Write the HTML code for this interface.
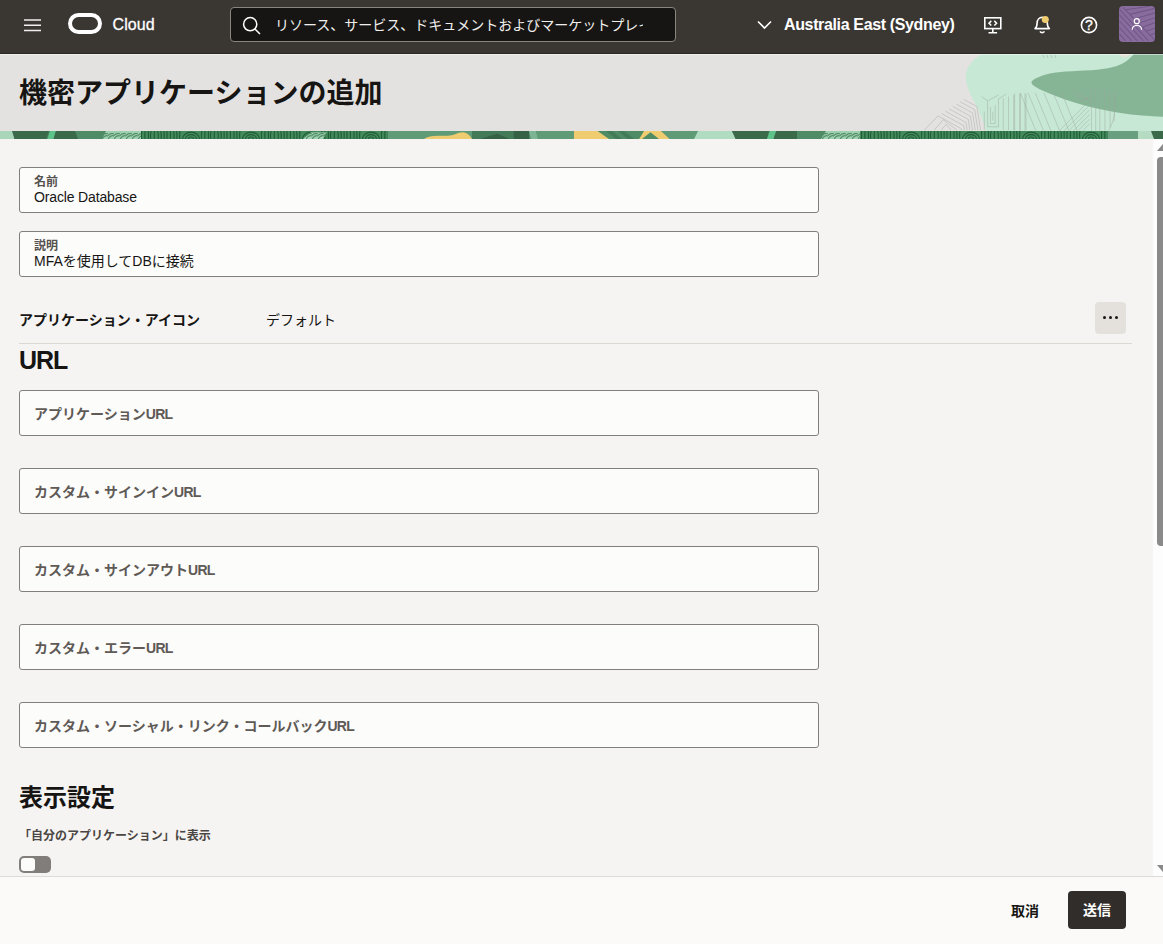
<!DOCTYPE html>
<html lang="ja">
<head>
<meta charset="utf-8">
<title>機密アプリケーションの追加</title>
<style>
*{box-sizing:border-box;margin:0;padding:0}
html,body{width:1163px;height:944px;overflow:hidden;background:#f5f4f2}
body{position:relative;font-family:"Liberation Sans","Noto Sans CJK JP",sans-serif;color:#161513;font-size:14px}
.abs{position:absolute}
/* header */
#hdr{position:absolute;left:0;top:0;width:1163px;height:54px;background:#3a3632;color:#fff;border-bottom:1px solid #2b2724;z-index:3}
#hdr svg{position:absolute;overflow:visible}
#cloud{position:absolute;left:112.6px;top:15px;font-size:16px;line-height:20px;color:#fff;letter-spacing:0.05px;-webkit-text-stroke:.3px #fff}
#search{position:absolute;left:230px;top:7px;width:446px;height:35px;border:1px solid #8b8580;border-radius:4px;background:#161513}
#search span{position:absolute;left:44px;top:6px;width:368px;height:22px;line-height:22px;font-size:14px;color:#f1efed;white-space:nowrap;overflow:hidden}
#region{position:absolute;left:784px;top:15px;font-size:16px;line-height:20px;font-weight:bold;color:#fff;letter-spacing:-0.36px;white-space:nowrap}
#avatar{position:absolute;left:1119px;top:6px;width:36px;height:36px;border-radius:4px;background:#886c9d;overflow:hidden}
/* banner */
#banner{position:absolute;left:0;top:53px;width:1163px;height:86px;background:#e4e2e0;overflow:hidden}
#banner svg{position:absolute;left:0;top:0}
#title{position:absolute;left:19px;top:21px;font-size:28px;line-height:40px;font-weight:bold;color:#161513;white-space:nowrap}
/* content */
.field{position:absolute;left:19px;width:800px;height:46px;border:1px solid #817e7b;border-radius:3px;background:#fcfcfb}
.field .lbl{position:absolute;left:14px;top:7px;font-size:12px;line-height:14px;color:#55514e;font-weight:bold}
.field .val{position:absolute;left:14px;top:20px;font-size:14px;line-height:18px;color:#161513;white-space:nowrap}
.field .ph span{letter-spacing:-0.7px}
.field .ph{position:absolute;left:14px;top:12.7px;font-size:14px;line-height:20px;color:#5f5a56;font-weight:bold;white-space:nowrap}
h2{position:absolute;left:19px;font-size:24px;line-height:30px;font-weight:bold;color:#161513;white-space:nowrap}
#iconlbl{position:absolute;left:19px;top:310px;font-size:14px;line-height:20px;font-weight:bold;color:#161513;white-space:nowrap}
#iconval{position:absolute;left:266px;top:310px;font-size:14px;line-height:20px;color:#161513;white-space:nowrap}
#more{position:absolute;left:1095px;top:302px;width:31px;height:32px;border-radius:4px;background:#e4e1dd}
#more i{position:absolute;top:14px;width:3px;height:3px;border-radius:50%;background:#161513}
#hr1{position:absolute;left:19px;top:343px;width:1113px;height:1px;background:#dcd9d5}
#showlbl{position:absolute;left:19px;top:827.5px;font-size:12px;line-height:16px;font-weight:bold;color:#4a4643;white-space:nowrap}
#toggle{position:absolute;left:19px;top:856px;width:32px;height:17px;border-radius:5px;background:#807d7a}
#toggle i{position:absolute;left:2px;top:2px;width:14px;height:13px;border-radius:3px;background:#fcfcfb}
/* scrollbar */
#sbtrack{position:absolute;left:1152px;top:139px;width:11px;height:737px;background:linear-gradient(90deg,#f5f4f2,#fdfdfd 2px)}
#sbthumb{position:absolute;left:1157px;top:157px;width:10px;height:389px;border-radius:4px;background:#8a8a8a}
/* footer */
#footer{position:absolute;left:0;top:876px;width:1163px;height:68px;background:#fbfaf9;border-top:1px solid #dedbd7}
#cancel{position:absolute;left:1011px;top:23.5px;font-size:14px;line-height:20px;font-weight:bold;color:#161513}
#submit{position:absolute;left:1068px;top:14px;width:58px;height:38px;border-radius:4px;background:#312d2a;color:#fff;font-size:14px;line-height:38px;font-weight:bold;text-align:center}
</style>
</head>
<body>

<div id="hdr">
  <!-- hamburger -->
  <svg style="left:23.500px;top:19px" width="17" height="13" viewBox="0 0 17 13"><path d="M0 1h17M0 6.200h17M0 11.400h17" stroke="#f1efed" stroke-width="1.500" fill="none"/></svg>
  <!-- oracle O -->
  <svg style="left:68px;top:13px" width="34" height="21" viewBox="0 0 34 21"><rect x="2" y="2" width="30" height="17" rx="8.5" ry="8.5" fill="none" stroke="#fff" stroke-width="4"/></svg>
  <div id="cloud">Cloud</div>
  <div id="search">
    <svg style="left:11px;top:8px" width="20" height="20" viewBox="0 0 20 20"><circle cx="8.2" cy="8.2" r="6.6" fill="none" stroke="#fff" stroke-width="1.5"/><path d="M13 13l5 5" stroke="#fff" stroke-width="1.5" fill="none"/></svg>
    <span>リソース、サービス、ドキュメントおよびマーケットプレイスの検索</span>
  </div>
  <svg style="left:757px;top:20px" width="15" height="10" viewBox="0 0 15 10"><path d="M1 1.5l6.5 6.5l6.5-6.5" stroke="#fff" stroke-width="1.6" fill="none"/></svg>
  <div id="region">Australia East (Sydney)</div>
  <!-- monitor -->
  <svg style="left:984px;top:17px" width="18" height="17" viewBox="0 0 18 17"><rect x="0.800" y="0.800" width="16" height="10.800" fill="none" stroke="#fff" stroke-width="1.600"/><path d="M8.800 11.800v3.800M4.500 15.700h8.600" stroke="#fff" stroke-width="1.600" fill="none"/><path d="M7.300 3.900L5 6.200l2.300 2.300M10.300 3.900l2.300 2.300l-2.300 2.300" stroke="#fff" stroke-width="1.500" fill="none"/></svg>
  <!-- bell -->
  <svg style="left:1034px;top:16px" width="17" height="18" viewBox="0 0 17 18"><path d="M1 12.6h14.4c-1.6-1.2-2.1-2.6-2.1-5.6c0-3.4-2.2-5.6-5.1-5.6S3.100 3.600 3.100 7c0 3-.5 4.400-2.100 5.600z" fill="none" stroke="#fff" stroke-width="1.6" stroke-linejoin="round"/><path d="M6 15.300c.5.900 1.200 1.300 2.200 1.300s1.700-.4 2.200-1.300" fill="none" stroke="#fff" stroke-width="1.6"/><circle cx="11.300" cy="3.600" r="3.500" fill="#f0cc71"/></svg>
  <!-- help -->
  <svg style="left:1080px;top:16px" width="18" height="18" viewBox="0 0 18 18"><circle cx="9" cy="9" r="7.600" fill="none" stroke="#fff" stroke-width="1.6"/><text x="9" y="13.900" font-family="Liberation Sans, sans-serif" font-size="14" fill="#fff" stroke="#fff" stroke-width=".3" text-anchor="middle">?</text></svg>
  <div id="avatar">
    <svg style="left:0;top:0" width="36" height="36" viewBox="0 0 36 36"><path d="M0.5 3.3L29.5 34.8M0.5 8.9L24.4 34.8M0.5 15.0L18.3 34.8M0.5 21.6L12.7 34.8M0.5 28.2L6.6 34.8M4.1 1.3L36.1 34.3M6.6 3.8L30.5 0.3M10.7 8.4L36.1 2.3M15.3 13.0L36.1 6.9M20.3 17.0L36.1 11.7M23.9 21.1L36.1 16.5M27.0 25.2L36.1 21.9M30.5 29.2L36.1 27.2" stroke="#72578a" stroke-width="1.100" fill="none"/><circle cx="17.800" cy="15.200" r="2.500" fill="none" stroke="#fff" stroke-width="1.200"/><path d="M13.200 23.800c0-2.800 1.800-4.300 4.700-4.300s4.700 1.500 4.700 4.300" fill="none" stroke="#fff" stroke-width="1.200"/></svg>
  </div>
</div>

<div id="banner">
  <svg id="bsvg" width="1163" height="86" viewBox="0 0 1163 86"><defs><pattern id="pl" width="60" height="8" patternUnits="userSpaceOnUse" x="141" y="78"><rect width="60" height="8" fill="#438a5a"/><path d="M0.8 0q-0.6 4 -0.2 8M4.0 0q-0.3 4 -0.1 8M7.3 0q0.3 4 0.1 8M10.2 0q-1.2 4 -0.4 8M13.6 0q-0.6 4 -0.2 8M16.6 0q1.2 4 0.4 8M19.8 0q0.8 4 0.2 8M23.0 0q0.3 4 0.1 8M25.9 0q0.3 4 0.1 8M29.4 0q0.1 4 0.0 8M32.8 0q0.4 4 0.1 8M35.6 0q0.6 4 0.2 8M38.9 0q-0.5 4 -0.1 8M47.5 8a2.5 2.0 0 0 1 5.0 0M44.5 8a5.5 4.4 0 0 1 11.0 0M41.5 8a8.5 6.8 0 0 1 17.0 0" stroke="#215d38" stroke-width="1.2" fill="none"/></pattern><pattern id="pl2" width="6" height="8" patternUnits="userSpaceOnUse"><rect width="6" height="8" fill="#9fd0b0"/><path d="M0 6c2-3 4-4 6-3M0 2.500c2-2 4-2.5 6-1.5" stroke="#4f8c65" stroke-width="1.1" fill="none"/></pattern></defs><path d="M984 0C972 6 964 16 966 27C967 36 972 44 976 52C980 60 984 70 986 78H1163V0z" fill="#c6e8d4"/><path d="M1135 0C1128 8 1122 12 1113 14C1100 17.5 1083 17.5 1066 18.500C1052 19.5 1040 22 1032.5 27.500C1029 30.5 1034 34 1047 39.500C1060 45 1072 49 1083 52C1096 55.5 1108 58 1119 59.800C1135 62.3 1150 63.5 1163 63.800V0z" fill="#86b596"/><path d="M1118 0h14c-3 4-7 5-11 3.500z" fill="#ecdcd6" opacity=".8"/><g clip-path="none" stroke="#9aa39c" stroke-opacity=".6" stroke-width=".7" fill="none"><path d="M924.3 77.1L938.0 62.9L961.6 75.9L961.8 77.1M941.7 60.5L963.8 72.7L964.5 77.1M945.4 58.2L966.0 69.5L967.2 77.1M949.0 55.8L968.2 66.3L969.9 77.1M952.7 53.4L970.3 63.1L972.6 77.1M956.4 51.1L972.5 59.9L975.3 77.1M960.1 48.7L974.7 56.7L977.9 77.1M963.8 46.4L976.9 53.5L980.6 77.1M934.2 77.1L943.2 66.7L956.9 77.1M941.3 77.1L946.0 71.4L951.2 77.1M981.5 43.5L987.6 47.8L998.5 42.1M987.6 47.8L987.6 73.8L998.5 73.8L998.5 45.9L1006.1 41.1M990.5 53.9L990.5 70.5L995.2 70.5L995.2 52.5M992.8 58.7L992.8 67.2M984.3 58.7L984.3 77.1M1003.3 44.9L1003.3 77.1M1008.5 43.5L1008.5 77.1M1013.7 42.1L1013.7 77.1M1020.3 40.7L1020.3 77.1M1026.0 40.7L1026.0 77.1M1014.6 40.4L1014.6 77.6M1019.8 40.4L1019.8 77.6M1025.0 40.4L1025.0 77.6M1020.3 39.9L1035.8 77.6M1028.1 39.9L1043.5 77.6M1035.3 39.9L1050.8 77.6M1044.1 39.9L1059.5 77.6M1053.3 39.9L1068.8 77.6M1061.6 39.9L1077.1 77.6M1059.5 77.6L1089.5 47.6M1064.2 77.6L1089.5 52.3M1068.8 77.6L1089.5 56.9M1073.5 77.6L1089.5 61.6M1078.1 77.6L1089.5 66.2M1082.8 77.6L1089.5 70.9M1071.9 37.3L1081.2 49.2L1089.5 41.4M1075.0 38.1L1082.4 47.9L1089.5 43.5M1078.1 39.0L1083.7 46.7L1089.5 45.6M1081.2 39.8L1084.9 45.5L1089.5 47.6M1091.5 35.3L1091.5 77.6M1095.7 35.3L1095.7 77.6M1099.8 35.3L1099.8 77.6M1104.9 35.8L1104.9 77.6M1110.1 36.8L1110.1 74.5M1114.2 38.9L1114.2 68.3M1114.7 39.4C1117.3 52.8 1114.2 68.3 1108.6 77.6M1042.0 0l2 5M1046.0 0l2 5M1050.0 0l2 5M1054.0 0l2 5"/></g><rect x="0" y="78" width="1163" height="8" fill="#4f8c65"/><rect x="0" y="78" width="14" height="8" fill="#a9d6b9"/><polygon points="12,78 49,78 46.5,86 14.5,86" fill="#3b6a4a"/><polygon points="50,78 56,78 53.5,86 47.5,86" fill="#5dc389"/><polygon points="56,78 75,78 78,86 53.5,86" fill="#3b6a4a"/><rect x="78" y="78" width="25" height="8" fill="#4f8c65"/><polygon points="106,78 141,78 141,86 102,86" fill="url(#pl2)"/><rect x="141" y="78" width="247" height="8" fill="url(#pl)"/><polygon points="303,86 311,79.2 327,79.6 323,86" fill="url(#pl2)"/><rect x="388" y="78" width="84" height="8" fill="#5e9b76"/><path d="M424 86c3-2.2 8-3.2 14-3.200c8 0 12 .5 17-1.500c4-1.8 8-2.8 11-1.300c3 1.5 5 4 6 6z" fill="#f0cc71"/><rect x="472" y="78" width="41.5" height="8" fill="#437a58"/><polygon points="480,86 497,80.8 510,86" fill="#356244"/><rect x="513.5" y="78" width="15.5" height="8" fill="#356244"/><polygon points="529,78 536,78 538,86 531,86" fill="#7db594"/><polygon points="536,78 574,78 574,86 538,86" fill="#5e9b76"/><rect x="574" y="78" width="96" height="8" fill="#f0cc71"/><polygon points="597.5,78 644,78 639.2,86 609,86" fill="#4f8c65"/><polygon points="606,78 612,78 622,86 616,86" fill="#437a58"/><polygon points="618,78 624,78 634,86 628,86" fill="#437a58"/><polygon points="650.5,79.2 659,86 642,86" fill="#4f8c65"/><polygon points="661,78 698,78 694,86 669.5,86" fill="#5e9b76"/><polygon points="698,78 732,78 735.7,86 694,86" fill="#b0dcc1"/><polygon points="732,78 769,78 767,86 735.7,86" fill="#3b6a4a"/><polygon points="769.8,78 776.3,78 773.5,86 767,86" fill="#5dc389"/><polygon points="776.3,78 797,78 797,86 773.5,86" fill="#3b6a4a"/><rect x="797" y="78" width="3" height="8" fill="#4f8c65"/><rect x="800" y="78" width="22" height="8" fill="#4f8c65"/><polygon points="826,78 860,78 860,86 821,86" fill="url(#pl2)"/><rect x="860" y="78" width="248" height="8" fill="url(#pl)"/><rect x="1108" y="78" width="30" height="8" fill="#699e7e"/><rect x="1138" y="78" width="17" height="8" fill="#b5dcc3"/><polygon points="1151,78 1163,78 1163,86 1154,86" fill="#3b6a4a"/></svg>
  <div style="position:absolute;left:0;top:1px;width:1163px;height:1px;background:rgba(255,255,255,.5)"></div>
  <div id="title">機密アプリケーションの追加</div>
</div>

<div class="field" style="top:167px"><div class="lbl">名前</div><div class="val" style="letter-spacing:-0.15px">Oracle Database</div></div>
<div class="field" style="top:231px"><div class="lbl">説明</div><div class="val">MFAを使用してDBに接続</div></div>

<div id="iconlbl">アプリケーション・アイコン</div>
<div id="iconval">デフォルト</div>
<div id="more"><i style="left:8px"></i><i style="left:14px"></i><i style="left:20px"></i></div>
<div id="hr1"></div>

<h2 style="top:345px;font-size:25px;letter-spacing:-1px">URL</h2>
<div class="field" style="top:390px"><div class="ph">アプリケーション<span>URL</span></div></div>
<div class="field" style="top:468px"><div class="ph">カスタム・サインイン<span>URL</span></div></div>
<div class="field" style="top:546px"><div class="ph">カスタム・サインアウト<span>URL</span></div></div>
<div class="field" style="top:624px"><div class="ph">カスタム・エラー<span>URL</span></div></div>
<div class="field" style="top:702px"><div class="ph">カスタム・ソーシャル・リンク・コールバック<span>URL</span></div></div>

<h2 style="top:783px">表示設定</h2>
<div id="showlbl">「自分のアプリケーション」に表示</div>
<div id="toggle"><i></i></div>

<div id="sbtrack"></div>
<svg class="abs" style="left:1157px;top:144px" width="6" height="7" viewBox="0 0 6 7"><path d="M0 7L6 0V7z" fill="#8a8a8a"/></svg>
<div id="sbthumb"></div>
<svg class="abs" style="left:1157px;top:865px" width="6" height="7" viewBox="0 0 6 7"><path d="M0 0H6V7z" fill="#8a8a8a"/></svg>

<div id="footer">
  <div id="cancel">取消</div>
  <div id="submit">送信</div>
</div>

</body>
</html>
